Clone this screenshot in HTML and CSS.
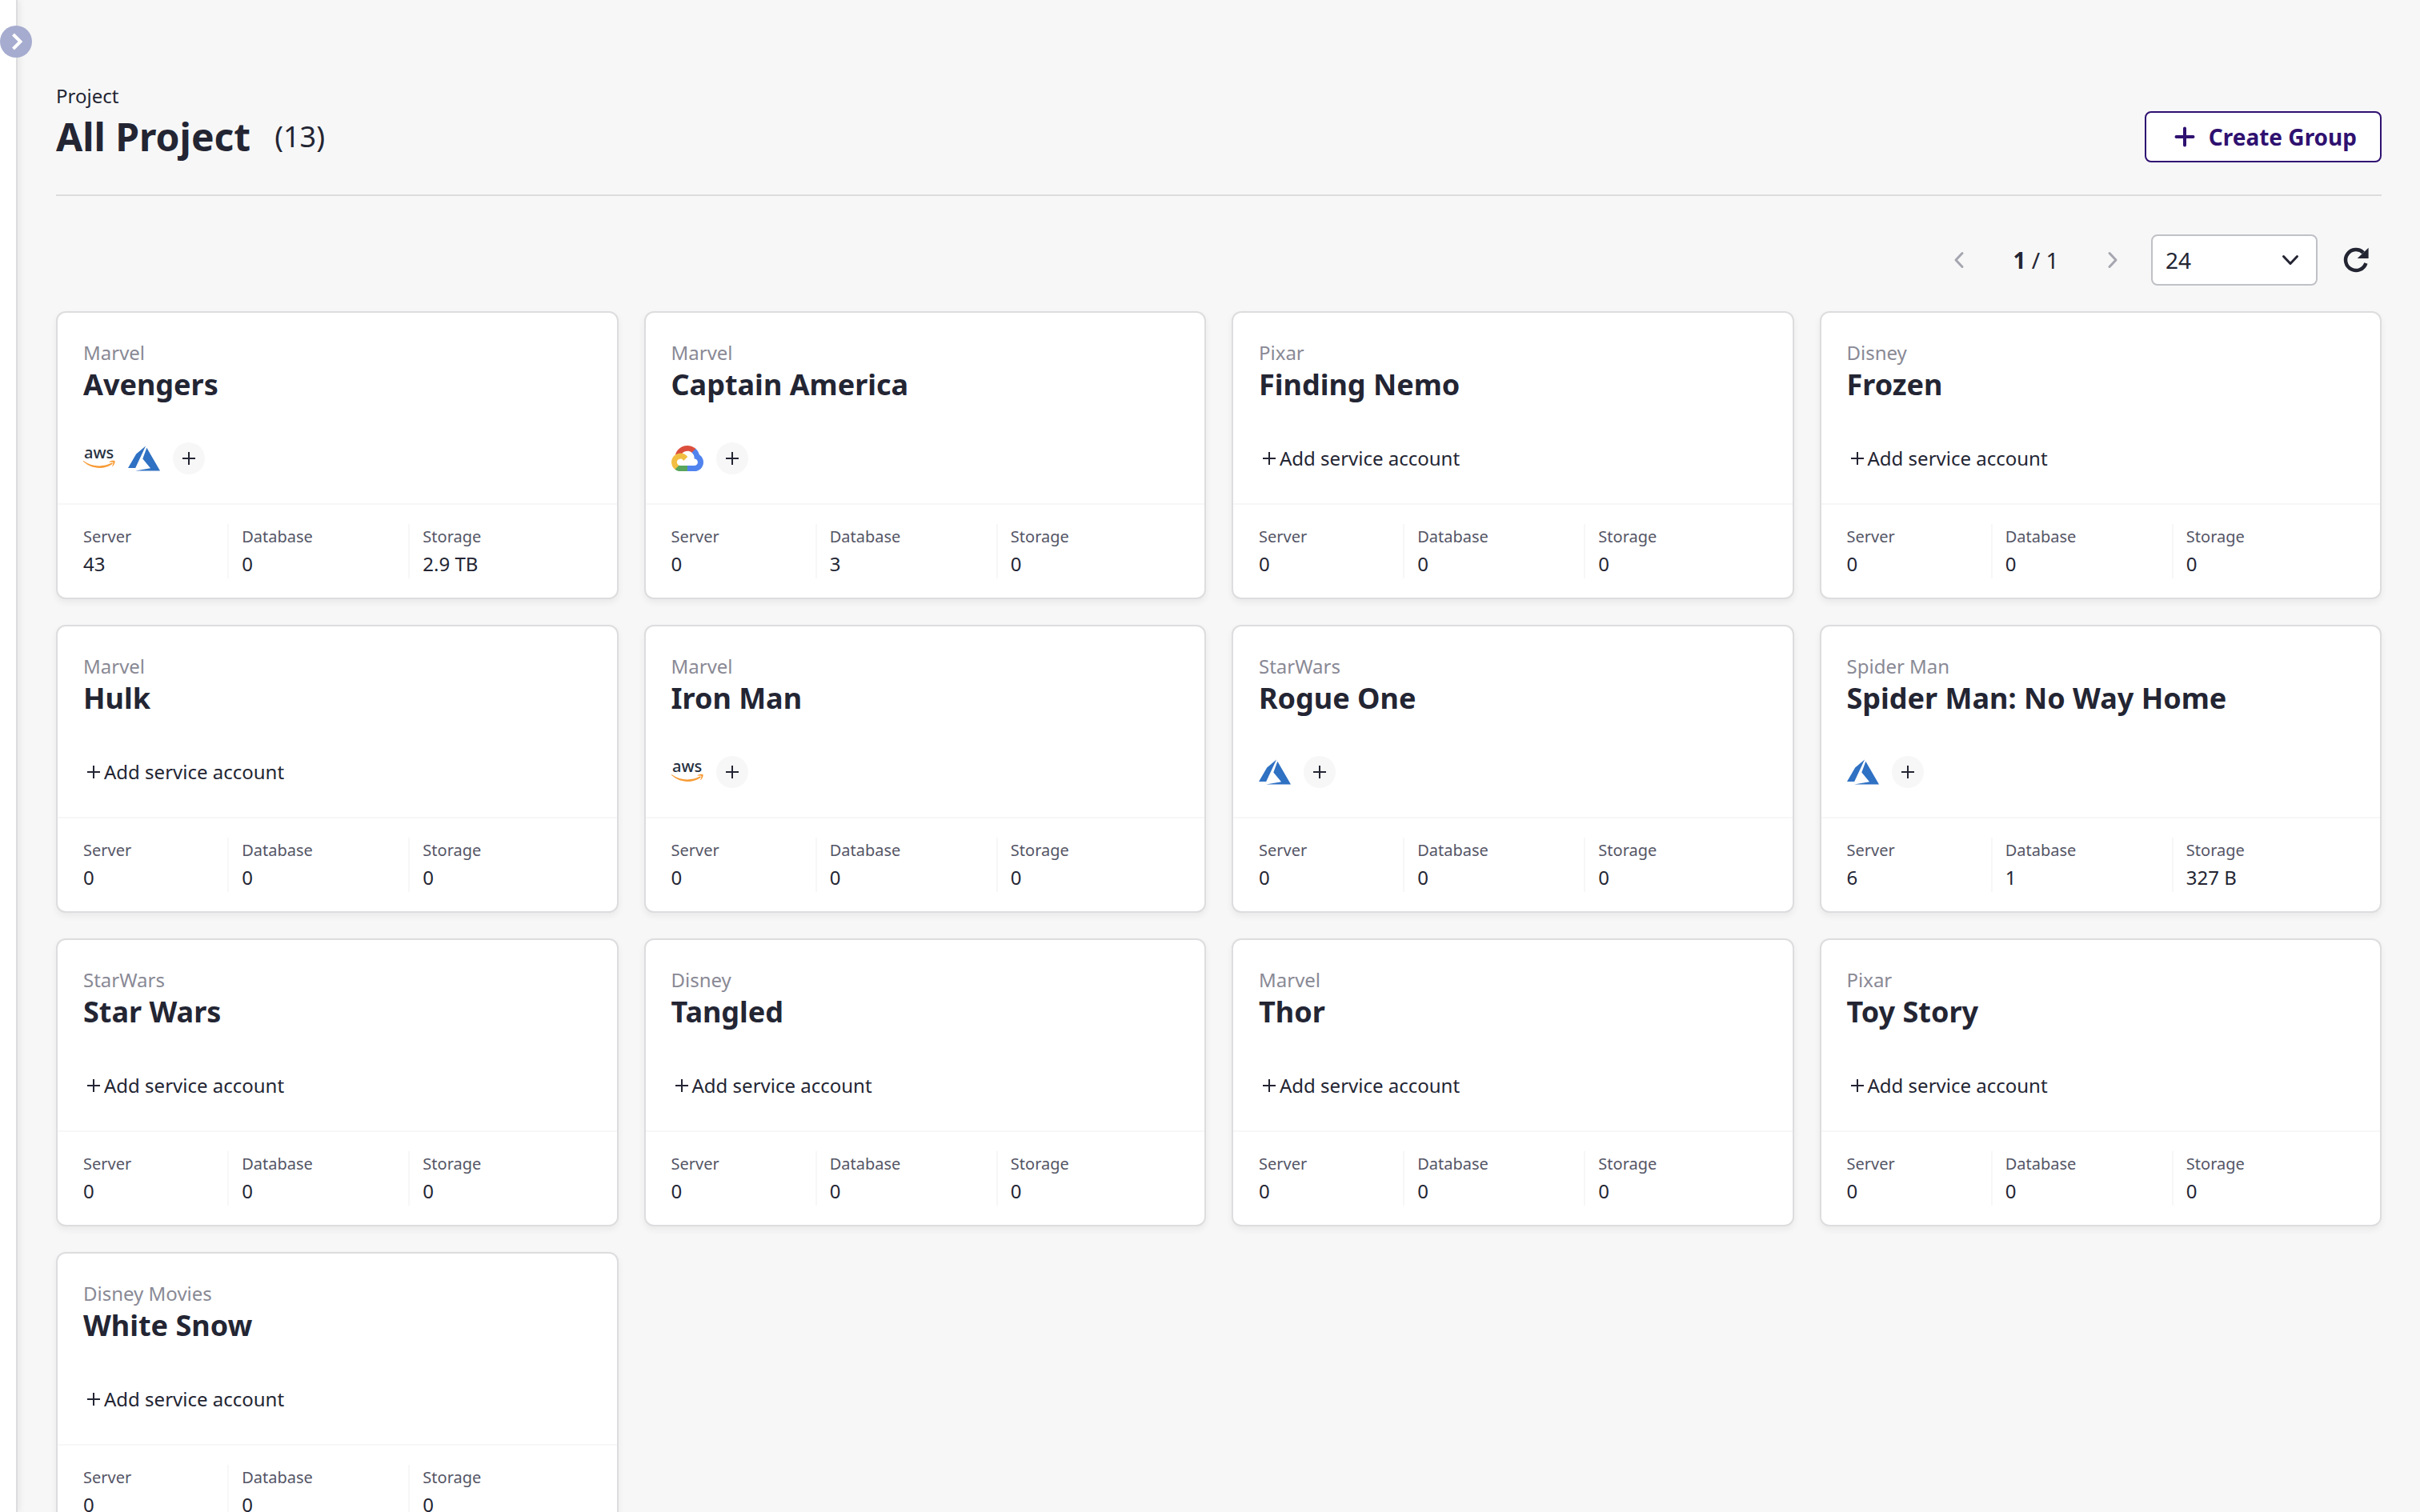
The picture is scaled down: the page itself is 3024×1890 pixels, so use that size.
FILE: index.html
```html
<!DOCTYPE html>
<html lang="en">
<head>
<meta charset="utf-8">
<meta name="viewport" content="width=device-width, initial-scale=1">
<title>All Project</title>
<link rel="stylesheet" href="styles.css">
</head>
<body>
<svg class="sprite" aria-hidden="true">
  <symbol id="plus" viewBox="0 0 20 20"><path d="M10 2v16M2 10h16" fill="none" stroke="currentColor" stroke-width="2"/></symbol>
  <symbol id="plus-bold" viewBox="0 0 28 28"><path d="M14 3.500v21M3.500 14h21" fill="none" stroke="currentColor" stroke-width="4" stroke-linecap="round"/></symbol>
  <symbol id="chevron-right" viewBox="0 0 24 24"><path d="M8 3.500l8 8.500-8 8.500" fill="none" stroke="currentColor" stroke-width="3" stroke-linecap="round" stroke-linejoin="round"/></symbol>
  <symbol id="chevron-left" viewBox="0 0 24 24"><path d="M16 3.500L8 12l8 8.500" fill="none" stroke="currentColor" stroke-width="3" stroke-linecap="round" stroke-linejoin="round"/></symbol>
  <symbol id="aws" viewBox="0 0 40 40">
    <text x="1" y="20" font-size="20" font-weight="500" fill="#252f3e" class="aws-word">aws</text>
    <path d="M.6 23.200C11 30.500 24 31.500 35.600 25.600c.9-.4 1.700.6.800 1.300C26 34 11 34 .2 24.100c-.5-.6-.1-1.200.4-.9z" fill="#f79b34"/>
    <path d="M32.600 24.200c2-1.600 5.600-1.900 6.700-1.100.9 1-.2 4.800-2.500 6.800-.4.300-.7.100-.5-.3.600-1.500 1.500-3.900 1-4.600-.5-.6-3-.4-4.300-.2-.6 0-.8-.3-.4-.6z" fill="#f79b34"/>
  </symbol>
  <symbol id="azure" viewBox="0 0 24 24"><path d="M5.483 21.300H24L14.025 4.013l-3.038 8.347 5.836 6.938L5.483 21.300zM13.230 2.700L6.105 8.677 0 19.253h5.505v.014L13.230 2.700z" fill="#2f71c3"/></symbol>
  <symbol id="gcp" viewBox="0 -25 256 256">
    <path fill="#dc4f3c" d="M170.252 56.819l22.253-22.253 1.483-9.370C153.437-11.677 88.976-7.496 52.420 33.920 42.267 45.423 34.734 59.764 30.717 74.573l7.970-1.123 44.505-7.340 3.436-3.513c19.797-21.742 53.270-24.667 76.128-6.168l7.496.390z"/>
    <path fill="#5083ee" d="M224.205 73.918a100.249 100.249 0 0 0-30.217-48.722l-31.232 31.232a55.515 55.515 0 0 1 20.379 44.037v5.544c15.350 0 27.797 12.445 27.797 27.796 0 15.352-12.446 27.485-27.797 27.485h-55.671l-5.466 5.934v33.340l5.466 5.231h55.670c39.930.311 72.553-31.494 72.864-71.424a72.303 72.303 0 0 0-31.793-60.453"/>
    <path fill="#58a55c" d="M71.870 205.796h55.593V161.290H71.870a27.275 27.275 0 0 1-11.400-2.498l-7.887 2.420-22.409 22.253-1.952 7.574c12.567 9.489 27.900 14.825 43.647 14.757"/>
    <path fill="#f2be42" d="M71.870 61.425C31.940 61.663-.237 94.228.001 134.158a72.301 72.301 0 0 0 28.222 56.880l32.248-32.246c-13.990-6.323-20.208-22.786-13.887-36.776 6.323-13.990 22.786-20.208 36.775-13.888a27.796 27.796 0 0 1 13.887 13.888l32.248-32.248A72.224 72.224 0 0 0 71.870 61.425"/>
  </symbol>
</svg>

<div class="shell">
  <aside class="sidebar">
    <button class="sidebar-toggle" type="button" aria-label="Open sidebar">
      <svg width="40" height="40" viewBox="0 0 40 40" aria-hidden="true"><path d="M16.500 11l9 9-9 9" fill="none" stroke="currentColor" stroke-width="4"/></svg>
    </button>
  </aside>

  <main class="page">
    <header class="page-header">
      <p class="breadcrumb">Project</p>
      <div class="heading-row">
        <h1 class="title">All Project</h1>
        <span class="count">(13)</span>
        <button class="create-button" type="button">
          <svg width="28" height="28" aria-hidden="true"><use href="#plus-bold"/></svg>Create Group
        </button>
      </div>
    </header>

    <div class="toolbar">
      <div class="pager">
        <button class="icon-button muted" type="button" aria-label="Previous page"><svg width="24" height="24" aria-hidden="true"><use href="#chevron-left"/></svg></button>
        <span class="page-number"><b>1</b> / 1</span>
        <button class="icon-button muted" type="button" aria-label="Next page"><svg width="24" height="24" aria-hidden="true"><use href="#chevron-right"/></svg></button>
      </div>
      <div class="page-size">
        <select aria-label="Items per page"><option>12</option><option selected>24</option><option>36</option></select>
        <svg width="24" height="24" viewBox="0 0 24 24" aria-hidden="true"><path d="M3.500 7.500l8.500 9 8.500-9" fill="none" stroke="currentColor" stroke-width="3" stroke-linecap="round" stroke-linejoin="round"/></svg>
      </div>
      <button class="icon-button" type="button" aria-label="Refresh">
        <svg width="36" height="36" viewBox="0 0 36 36" aria-hidden="true"><path d="M27.200 8.800A13 13 0 1 0 30.400 22" fill="none" stroke="currentColor" stroke-width="4.500"/><path d="M33.600 2.700V16H19.700z" fill="currentColor"/></svg>
      </button>
    </div>

    <section class="cards" aria-label="Projects">
      <article class="card">
        <div class="card-main"><p class="group">Marvel</p><h2 class="name">Avengers</h2>
          <div class="accounts"><svg class="logo" role="img" aria-label="AWS"><use href="#aws"/></svg><svg class="logo" role="img" aria-label="Azure"><use href="#azure"/></svg><button class="add-round" type="button" aria-label="Add service account"><svg class="plus" aria-hidden="true"><use href="#plus"/></svg></button></div></div>
        <dl class="stats"><div><dt>Server</dt><dd>43</dd></div><div><dt>Database</dt><dd>0</dd></div><div><dt>Storage</dt><dd>2.9 TB</dd></div></dl>
      </article>
      <article class="card">
        <div class="card-main"><p class="group">Marvel</p><h2 class="name">Captain America</h2>
          <div class="accounts"><svg class="logo" role="img" aria-label="Google Cloud"><use href="#gcp"/></svg><button class="add-round" type="button" aria-label="Add service account"><svg class="plus" aria-hidden="true"><use href="#plus"/></svg></button></div></div>
        <dl class="stats"><div><dt>Server</dt><dd>0</dd></div><div><dt>Database</dt><dd>3</dd></div><div><dt>Storage</dt><dd>0</dd></div></dl>
      </article>
      <article class="card">
        <div class="card-main"><p class="group">Pixar</p><h2 class="name">Finding Nemo</h2>
          <div class="accounts"><button class="add-account" type="button"><svg class="plus" aria-hidden="true"><use href="#plus"/></svg>Add service account</button></div></div>
        <dl class="stats"><div><dt>Server</dt><dd>0</dd></div><div><dt>Database</dt><dd>0</dd></div><div><dt>Storage</dt><dd>0</dd></div></dl>
      </article>
      <article class="card">
        <div class="card-main"><p class="group">Disney</p><h2 class="name">Frozen</h2>
          <div class="accounts"><button class="add-account" type="button"><svg class="plus" aria-hidden="true"><use href="#plus"/></svg>Add service account</button></div></div>
        <dl class="stats"><div><dt>Server</dt><dd>0</dd></div><div><dt>Database</dt><dd>0</dd></div><div><dt>Storage</dt><dd>0</dd></div></dl>
      </article>
      <article class="card">
        <div class="card-main"><p class="group">Marvel</p><h2 class="name">Hulk</h2>
          <div class="accounts"><button class="add-account" type="button"><svg class="plus" aria-hidden="true"><use href="#plus"/></svg>Add service account</button></div></div>
        <dl class="stats"><div><dt>Server</dt><dd>0</dd></div><div><dt>Database</dt><dd>0</dd></div><div><dt>Storage</dt><dd>0</dd></div></dl>
      </article>
      <article class="card">
        <div class="card-main"><p class="group">Marvel</p><h2 class="name">Iron Man</h2>
          <div class="accounts"><svg class="logo" role="img" aria-label="AWS"><use href="#aws"/></svg><button class="add-round" type="button" aria-label="Add service account"><svg class="plus" aria-hidden="true"><use href="#plus"/></svg></button></div></div>
        <dl class="stats"><div><dt>Server</dt><dd>0</dd></div><div><dt>Database</dt><dd>0</dd></div><div><dt>Storage</dt><dd>0</dd></div></dl>
      </article>
      <article class="card">
        <div class="card-main"><p class="group">StarWars</p><h2 class="name">Rogue One</h2>
          <div class="accounts"><svg class="logo" role="img" aria-label="Azure"><use href="#azure"/></svg><button class="add-round" type="button" aria-label="Add service account"><svg class="plus" aria-hidden="true"><use href="#plus"/></svg></button></div></div>
        <dl class="stats"><div><dt>Server</dt><dd>0</dd></div><div><dt>Database</dt><dd>0</dd></div><div><dt>Storage</dt><dd>0</dd></div></dl>
      </article>
      <article class="card">
        <div class="card-main"><p class="group">Spider Man</p><h2 class="name">Spider Man: No Way Home</h2>
          <div class="accounts"><svg class="logo" role="img" aria-label="Azure"><use href="#azure"/></svg><button class="add-round" type="button" aria-label="Add service account"><svg class="plus" aria-hidden="true"><use href="#plus"/></svg></button></div></div>
        <dl class="stats"><div><dt>Server</dt><dd>6</dd></div><div><dt>Database</dt><dd>1</dd></div><div><dt>Storage</dt><dd>327 B</dd></div></dl>
      </article>
      <article class="card">
        <div class="card-main"><p class="group">StarWars</p><h2 class="name">Star Wars</h2>
          <div class="accounts"><button class="add-account" type="button"><svg class="plus" aria-hidden="true"><use href="#plus"/></svg>Add service account</button></div></div>
        <dl class="stats"><div><dt>Server</dt><dd>0</dd></div><div><dt>Database</dt><dd>0</dd></div><div><dt>Storage</dt><dd>0</dd></div></dl>
      </article>
      <article class="card">
        <div class="card-main"><p class="group">Disney</p><h2 class="name">Tangled</h2>
          <div class="accounts"><button class="add-account" type="button"><svg class="plus" aria-hidden="true"><use href="#plus"/></svg>Add service account</button></div></div>
        <dl class="stats"><div><dt>Server</dt><dd>0</dd></div><div><dt>Database</dt><dd>0</dd></div><div><dt>Storage</dt><dd>0</dd></div></dl>
      </article>
      <article class="card">
        <div class="card-main"><p class="group">Marvel</p><h2 class="name">Thor</h2>
          <div class="accounts"><button class="add-account" type="button"><svg class="plus" aria-hidden="true"><use href="#plus"/></svg>Add service account</button></div></div>
        <dl class="stats"><div><dt>Server</dt><dd>0</dd></div><div><dt>Database</dt><dd>0</dd></div><div><dt>Storage</dt><dd>0</dd></div></dl>
      </article>
      <article class="card">
        <div class="card-main"><p class="group">Pixar</p><h2 class="name">Toy Story</h2>
          <div class="accounts"><button class="add-account" type="button"><svg class="plus" aria-hidden="true"><use href="#plus"/></svg>Add service account</button></div></div>
        <dl class="stats"><div><dt>Server</dt><dd>0</dd></div><div><dt>Database</dt><dd>0</dd></div><div><dt>Storage</dt><dd>0</dd></div></dl>
      </article>
      <article class="card">
        <div class="card-main"><p class="group">Disney Movies</p><h2 class="name">White Snow</h2>
          <div class="accounts"><button class="add-account" type="button"><svg class="plus" aria-hidden="true"><use href="#plus"/></svg>Add service account</button></div></div>
        <dl class="stats"><div><dt>Server</dt><dd>0</dd></div><div><dt>Database</dt><dd>0</dd></div><div><dt>Storage</dt><dd>0</dd></div></dl>
      </article>
    </section>
  </main>
</div>
</body>
</html>
```
FILE: styles.css
```css
*, *::before, *::after { box-sizing: border-box; }

body, p, h1, h2, dl, dd { margin: 0; }

body {
  background: #f7f7f7;
  color: #232533;
  font-family: "Noto Sans", "Open Sans", sans-serif;
  font-size: 24px;
}

button, select {
  padding: 0;
  border: 0;
  background: none;
  color: inherit;
  font: inherit;
  cursor: pointer;
}

svg { display: block; flex: none; }

.sprite { position: absolute; width: 0; height: 0; }
.aws-word { font-family: "Noto Sans", sans-serif; }

/* App shell: the page area scrolls beside the collapsed sidebar */
.shell { display: flex; height: 100vh; }

.sidebar {
  position: relative;
  z-index: 1;
  flex: none;
  width: 22px;
  border-right: 2px solid #dddddf;
  background: #fff;
  box-shadow: 2px 0 8px rgba(0, 0, 0, .08);
}

.sidebar-toggle {
  position: absolute;
  top: 32px;
  left: 0;
  width: 40px;
  height: 40px;
  border-radius: 50%;
  background: #a6accf;
  color: #fff;
}

.page {
  flex: 1;
  min-width: 0;
  padding: 103px 48px 64px;
  overflow-y: auto;
  scrollbar-width: none;
}

/* Header */
.page-header { padding-bottom: 40px; border-bottom: 2px solid #ddd; }
.breadcrumb { margin-bottom: 2px; line-height: 34px; }
.heading-row { display: flex; align-items: center; gap: 30px; }
.title { font-size: 48px; line-height: 64px; font-weight: 700; }
.count { font-size: 36px; line-height: 64px; }

.create-button {
  display: flex;
  align-items: center;
  gap: 16px;
  height: 64px;
  margin-left: auto;
  padding: 0 29px 0 34px;
  border: 2px solid #2f1170;
  border-radius: 8px;
  background: #fff;
  color: #2f1170;
  font-size: 28px;
  font-weight: 700;
}

/* Toolbar */
.toolbar {
  display: flex;
  justify-content: flex-end;
  align-items: center;
  gap: 16px;
  padding: 48px 0 32px;
  font-size: 28px;
}

.pager { display: flex; align-items: center; }
.page-number { min-width: 128px; text-align: center; line-height: 64px; }

.icon-button { display: grid; place-items: center; width: 64px; height: 64px; }
.icon-button.muted { color: #a5a6b0; }

.page-size { display: grid; align-items: center; width: 208px; }
.page-size > * { grid-area: 1 / 1; }

.page-size select {
  width: 100%;
  height: 64px;
  padding: 0 16px;
  border: 2px solid #c0c1c6;
  border-radius: 8px;
  background: #fff;
  appearance: none;
}

.page-size svg { justify-self: end; margin-right: 22px; pointer-events: none; }

/* Cards */
.cards { display: grid; grid-template-columns: repeat(4, 1fr); gap: 32px; }

.card {
  border: 2px solid #dddddf;
  border-radius: 12px;
  background: #fff;
  box-shadow: 0 4px 8px rgba(0, 0, 0, .06);
}

.card-main { padding: 34px 32px 36px; border-bottom: 2px solid #f7f7f7; }
.group { color: #898995; line-height: 32px; }
.name { font-size: 36px; line-height: 48px; font-weight: 700; }

.accounts { display: flex; align-items: center; gap: 16px; height: 40px; margin-top: 48px; }
.logo { width: 40px; height: 40px; }
.plus { width: 20px; height: 20px; }

.add-round {
  display: grid;
  place-items: center;
  width: 40px;
  height: 40px;
  border-radius: 50%;
  background: #f7f7f7;
}

.add-account { display: flex; align-items: center; gap: 3px; padding-left: 3px; line-height: 32px; }

.stats { display: grid; grid-template-columns: 29fr 36fr 36fr; padding: 24px 32px; }
.stats > div + div { padding-left: 16px; }
.stats > div:not(:last-child) { border-right: 2px solid #f7f7f7; }
.stats dt { color: #545566; font-size: 20px; line-height: 32px; }
.stats dd { line-height: 36px; }
```
